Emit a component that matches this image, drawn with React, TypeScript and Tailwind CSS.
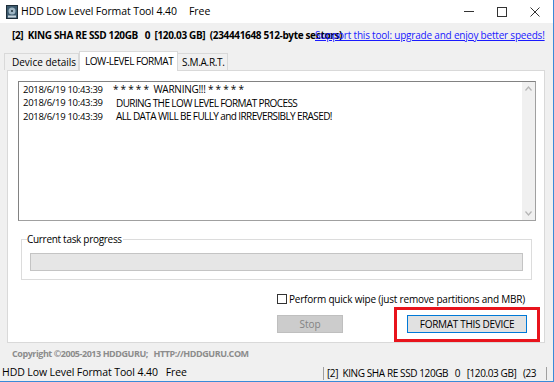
import React from "react";

const font = { fontFamily: '"Open Sans", "Noto Sans", sans-serif' };

function HddIcon() {
  return (
    <svg width="12" height="14" viewBox="0 0 12 14">
      <rect x="0.5" y="0.5" width="11" height="13" fill="#3c5a6e" stroke="#1e2e3a" />
      <circle cx="6" cy="6" r="3.5" fill="#9fb6c4" />
      <circle cx="6" cy="6" r="1" fill="#1e2e3a" />
      <rect x="2" y="10.5" width="8" height="2" fill="#c9d6de" />
    </svg>
  );
}

function LogLine({ date, msg, first }: { date: string; msg: string; first?: boolean }) {
  return (
    <div className="flex whitespace-pre h-[13.5px] items-center">
      <span className="w-[93px] text-[9.5px] tracking-[-0.3px]">{date}</span>
      {first ? (
        <span className="-ml-[3px] text-[10px] tracking-[-0.25px]">{msg}</span>
      ) : (
        <span className="text-[10px] tracking-[-0.6px]">{msg}</span>
      )}
    </div>
  );
}

export default function App() {
  return (
    <div
      className="w-[554px] h-[382px] overflow-hidden bg-[#f0f0f0] flex flex-col text-[#000] border-r border-b border-[#3a8ad8]"
      style={font}
    >
      {/* Title bar */}
      <div className="h-[23px] bg-white flex items-center shrink-0">
        <div className="ml-[6px] mr-[3px] flex items-center">
          <HddIcon />
        </div>
        <span className="text-[10.5px] tracking-[-0.1px] leading-none">HDD Low Level Format Tool 4.40</span>
        <span className="text-[10.5px] leading-none ml-[12px]">Free</span>
        <div className="ml-auto flex items-center h-full">
          <div className="w-[33px] h-full flex items-center justify-center">
            <div className="w-[10px] h-px bg-[#333]" />
          </div>
          <div className="w-[33px] h-full flex items-center justify-center">
            <div className="w-[10px] h-[10px] border border-[#333]" />
          </div>
          <div className="w-[33px] h-full flex items-center justify-center mr-[2px]">
            <svg width="10" height="10" viewBox="0 0 10 10">
              <path d="M0.5 0.5 L9.5 9.5 M9.5 0.5 L0.5 9.5" stroke="#333" strokeWidth="1" />
            </svg>
          </div>
        </div>
      </div>

      {/* Drive info row */}
      <div className="relative h-[25px] shrink-0 flex items-center">
        <span className="ml-[12px] text-[10px] font-bold whitespace-pre tracking-[-0.35px]">
          {"[2]  KING SHA RE SSD 120GB   0  [120.03 GB]  (234441648 512-byte sectors)"}
        </span>
        <span className="absolute left-[315px] top-[5px] text-[10px] leading-[14px] text-[#1a1aff] underline whitespace-nowrap tracking-[-0.2px]">
          Support this tool: upgrade and enjoy better speeds!
        </span>
      </div>

      {/* Tabs */}
      <div className="h-[22px] shrink-0 flex items-end pl-[4px] relative z-10">
        <div className="w-[75px] h-[17px] pl-[7px] flex items-center border border-[#d9d9d9] border-b-0 bg-[#f0f0f0] text-[10px] tracking-[0px]">
          Device details
        </div>
        <div className="w-[99px] h-[20px] pl-[5px] flex items-center border border-[#d9d9d9] border-b-0 bg-white text-[10px] tracking-[-0.45px] -mb-px">
          LOW-LEVEL FORMAT
        </div>
        <div className="w-[50px] h-[17px] pl-[4px] flex items-center border border-[#d9d9d9] border-b-0 border-l-0 bg-[#f0f0f0] text-[10px] tracking-[-0.3px]">
          S.M.A.R.T.
        </div>
      </div>

      {/* Panel */}
      <div className="ml-[7px] mr-[8px] h-[273px] shrink-0 bg-white border border-[#d9d9d9] flex flex-col">
        {/* Log */}
        <div className="mt-[10px] ml-[10px] mr-[8px] h-[142px] border border-[#828282] border-r-[#a0a0a0] border-b-[#a0a0a0] flex">
          <div className="flex-1 pl-[4px] pt-[1px]">
            <LogLine first date="2018/6/19 10:43:39" msg="* * * * *  WARNING!!! * * * * *" />
            <LogLine date="2018/6/19 10:43:39" msg="DURING THE LOW LEVEL FORMAT PROCESS" />
            <LogLine date="2018/6/19 10:43:39" msg="ALL DATA WILL BE FULLY and IRREVERSIBLY ERASED!" />
          </div>
          <div className="w-[13px] bg-[#f0f0f0] flex flex-col justify-between items-center py-[4px]">
            <svg width="7" height="5" viewBox="0 0 7 5">
              <path d="M0.5 4.5 L3.5 1 L6.5 4.5" stroke="#b5b5b5" fill="none" strokeWidth="1.2" />
            </svg>
            <svg width="7" height="5" viewBox="0 0 7 5">
              <path d="M0.5 0.5 L3.5 4 L6.5 0.5" stroke="#b5b5b5" fill="none" strokeWidth="1.2" />
            </svg>
          </div>
        </div>

        {/* Group box */}
        <div className="relative mt-[18px] ml-[13px] mr-[12px] h-[41px] border border-[#dcdcdc]">
          <span className="absolute left-[5px] -top-[9px] bg-white pr-[1px] text-[10px] tracking-[-0.3px] leading-[16px] text-[#000]">
            Current task progress
          </span>
          <div className="mt-[13px] ml-[8px] mr-[8px] h-[18px] bg-[#e6e6e6] border border-[#c4c4c4]" />
        </div>

        {/* Checkbox */}
        <div className="mt-[12px] ml-[269px] flex items-center h-[14px]">
          <div className="w-[10px] h-[10px] border border-[#333] bg-white" />
          <span className="ml-[2px] text-[10px] tracking-[-0.2px] leading-none whitespace-nowrap">
            Perform quick wipe (just remove partitions and MBR)
          </span>
        </div>

        {/* Buttons */}
        <div className="mt-[1px] flex items-center h-[36px]">
          <div className="ml-[269px] w-[66px] h-[18px] bg-[#cccccc] border border-[#bfbfbf] flex items-center justify-center text-[10px] text-[#838383]">
            Stop
          </div>
          <div className="ml-[51px] w-[146px] h-[35px] border-[3px] border-[#e8141c] flex items-center justify-center">
            <div className="w-[120px] h-[18px] bg-[#e1e1e1] border border-[#0078d7] flex items-center justify-center text-[10px] tracking-[-0.3px]">
              FORMAT THIS DEVICE
            </div>
          </div>
        </div>
      </div>

      {/* Copyright */}
      <div className="h-[22px] shrink-0 flex items-center pl-[12px] text-[9px] font-bold tracking-[-0.45px] text-[#8c8c8c] whitespace-pre">
        {"Copyright ©2005-2013 HDDGURU;   HTTP://HDDGURU.COM"}
      </div>

      {/* Status bar */}
      <div className="flex-1 flex items-center overflow-hidden">
        <div className="pl-[2px] whitespace-pre text-[10.5px] tracking-[-0.1px]">{"HDD Low Level Format Tool 4.40   Free"}</div>
        <div className="ml-auto flex items-center h-full">
          <div className="w-px h-[13px] bg-[#a0a0a0] mr-[3px]" />
          <div className="whitespace-pre w-[219px] overflow-hidden text-[10px] tracking-[-0.4px]">{"[2]  KING SHA RE SSD 120GB   0   [120.03 GB]   (23"}</div>
          <div className="w-px h-[13px] bg-[#a0a0a0] mr-[6px]" />
        </div>
      </div>
    </div>
  );
}
